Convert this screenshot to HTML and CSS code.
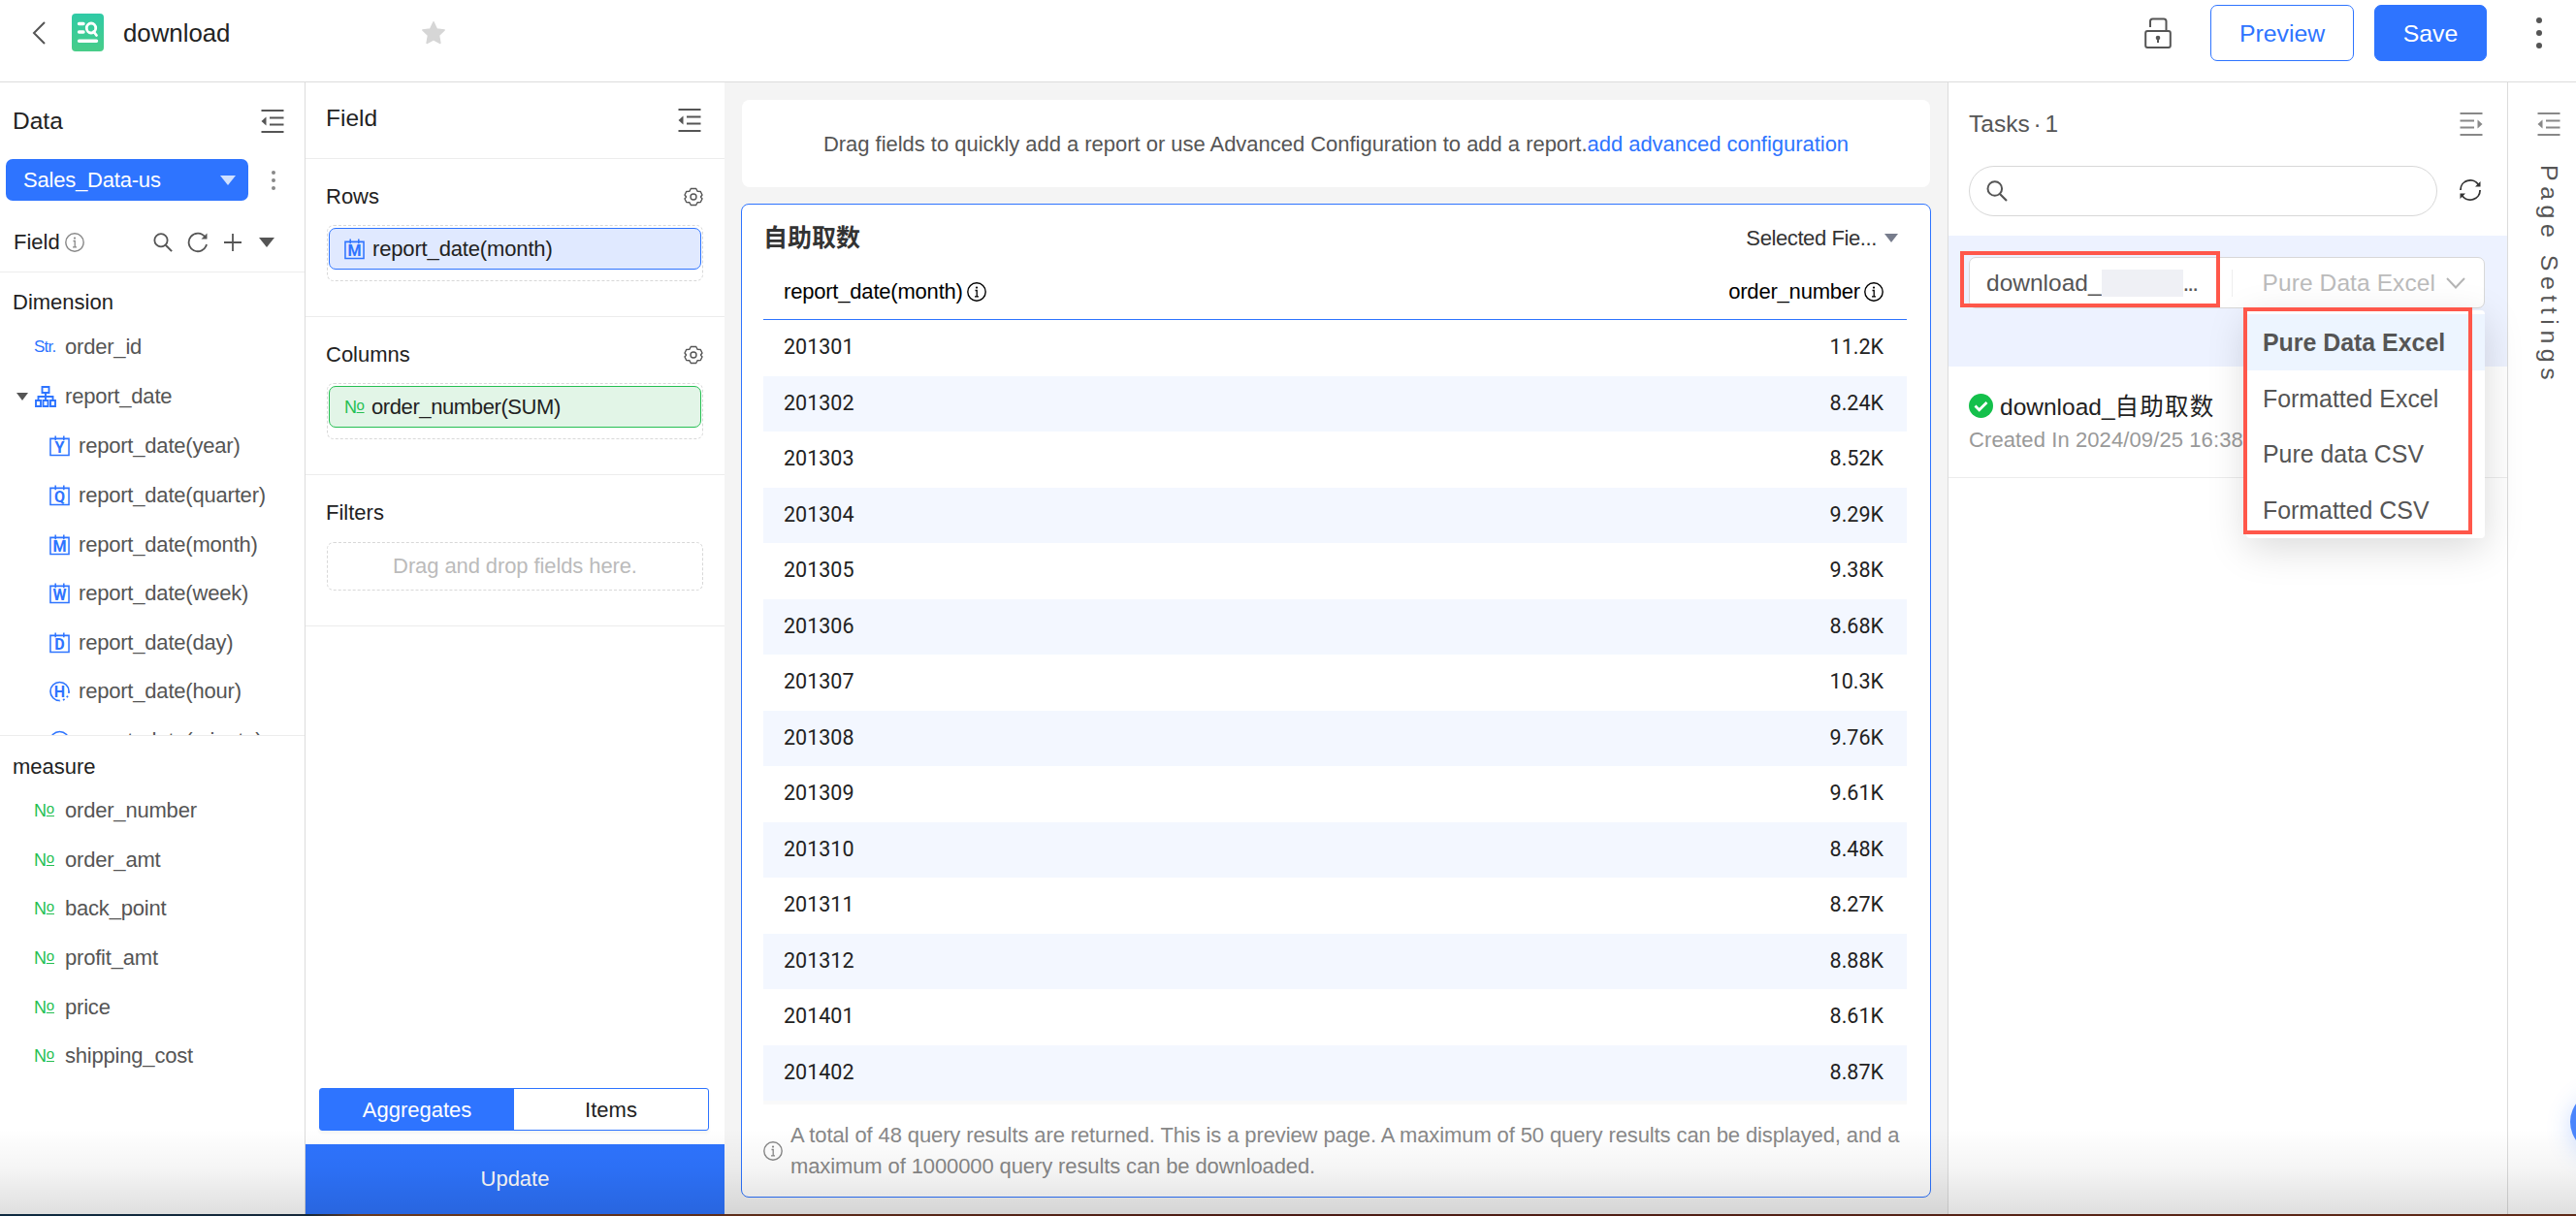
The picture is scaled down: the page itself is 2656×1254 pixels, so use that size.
FILE: index.html
```html
<!DOCTYPE html>
<html lang="en">
<head>
<meta charset="utf-8">
<title>download</title>
<link rel="stylesheet" href="styles.css">
</head>
<body>

<!-- shared icons -->
<svg width="0" height="0" class="defs">
  <symbol id="fold" viewBox="0 0 24 24"><path d="M0.500 1h23M9 8.500h14.500M9 15.500h14.500M0.500 23h23" fill="none" stroke="currentColor" stroke-width="1.800"/><path d="M5.500 7.500v9L0.500 12z" fill="currentColor"/></symbol>
  <symbol id="unfold" viewBox="0 0 24 24"><path d="M0.500 1h23M0.500 8.500H15M0.500 15.500H15M0.500 23h23" fill="none" stroke="currentColor" stroke-width="1.800"/><path d="M18.500 7.500v9l5-4.500z" fill="currentColor"/></symbol>
  <symbol id="info" viewBox="0 0 20 20"><circle cx="10" cy="10" r="9.200" fill="none" stroke="currentColor" stroke-width="1.400"/><path d="M8.500 8.500h1.700v6M8 14.800h4" fill="none" stroke="currentColor" stroke-width="1.300"/><circle cx="10" cy="5.600" r="1.100" fill="currentColor"/></symbol>
  <symbol id="search" viewBox="0 0 22 22"><circle cx="8.800" cy="8.500" r="7.300" fill="none" stroke="currentColor" stroke-width="2"/><path d="M14 14l7 7" stroke="currentColor" stroke-width="2.200"/></symbol>
  <symbol id="gear" viewBox="0 0 20 20"><path d="M7.300 1.500h5.400l1.500 2.800 3.100.2 1.700 3.500-1.500 2 1.500 2-1.700 3.500-3.100.2-1.500 2.800H7.300l-1.500-2.800-3.100-.2L1 12l1.500-2L1 8l1.700-3.500 3.100-.2z" fill="none" stroke="currentColor" stroke-width="1.400" stroke-linejoin="round"/><circle cx="10" cy="10" r="3" fill="none" stroke="currentColor" stroke-width="1.400"/></symbol>
  <symbol id="cal" viewBox="0 0 22 22"><path d="M1 3h20v18H1zM6.500 0v5M15.500 0v5" fill="none" stroke="currentColor" stroke-width="1.600"/></symbol>
  <symbol id="clock" viewBox="0 0 22 22"><path d="M11 21A10 10 0 1 1 21 11" fill="none" stroke="currentColor" stroke-width="1.700"/><path d="M21 11A10 10 0 0 1 11 21" fill="none" stroke="currentColor" stroke-width="1.900" stroke-dasharray="2 3"/></symbol>
</svg>

<div class="header">
  <svg class="back" viewBox="0 0 14 24"><path d="M13 1L2 12l11 11" fill="none" stroke="#555" stroke-width="2"/></svg>
  <svg class="logo" viewBox="0 0 33 39">
    <defs><linearGradient id="lg" x1="0" y1="0" x2="0" y2="1"><stop offset="0" stop-color="#2fcaa6"/><stop offset="1" stop-color="#48cd88"/></linearGradient></defs>
    <rect width="33" height="39" rx="4" fill="url(#lg)"/>
    <path d="M7.500 10.500h4.500M7.500 19h4.500M7.500 28.300h18" stroke="#fff" stroke-width="3.400" stroke-linecap="round" fill="none"/>
    <ellipse cx="20" cy="15" rx="4.700" ry="5" fill="none" stroke="#fff" stroke-width="2.800"/>
    <path d="M22.500 18.500l3 4" stroke="#fff" stroke-width="2.800" stroke-linecap="round"/>
  </svg>
  <span class="doc-name">download</span>
  <svg class="star" viewBox="0 0 24 24"><path d="M12 0.800l3.400 7.200 7.800 1-5.700 5.500 1.400 8L12 18.800 5.100 22.500l1.400-8L.8 9l7.800-1z" fill="#d6d6d6" stroke="#d6d6d6" stroke-width="1.500" stroke-linejoin="round"/></svg>
  <svg class="lock" viewBox="0 0 28 32"><rect x="1.200" y="14" width="25.600" height="17" rx="2" fill="none" stroke="#555" stroke-width="2"/><path d="M6 10V4a2.500 2.500 0 0 1 2.500-2.500H20A2.500 2.500 0 0 1 22.500 4v10" fill="none" stroke="#555" stroke-width="2"/><circle cx="14" cy="21" r="2.300" fill="#555"/><path d="M14 21v5" stroke="#555" stroke-width="2"/></svg>
  <button class="btn preview">Preview</button>
  <button class="btn save">Save</button>
  <svg class="more" viewBox="0 0 6 32"><circle cx="3" cy="3" r="3"/><circle cx="3" cy="16" r="3"/><circle cx="3" cy="29" r="3"/></svg>
</div>

<div class="main">

  <div class="data-panel">
    <div class="data-title"><span>Data</span><svg class="i24"><use href="#fold"/></svg></div>
    <div class="dataset">
      <div class="dataset-select"><span>Sales_Data-us</span><i class="caret"></i></div>
      <svg class="dots" viewBox="0 0 4 20"><circle cx="2" cy="2" r="2"/><circle cx="2" cy="10" r="2"/><circle cx="2" cy="18" r="2"/></svg>
    </div>
    <div class="field-bar">
      <span>Field</span><svg class="i20 info"><use href="#info"/></svg>
      <svg class="i20 find"><use href="#search"/></svg>
      <svg class="redo" viewBox="0 0 22 22"><path d="M18.500 5.500A9.300 9.300 0 1 0 20 13" fill="none" stroke="#555" stroke-width="1.800"/><path d="M20.500 1.500v6h-6z" fill="#555"/></svg>
      <svg class="plus" viewBox="0 0 18 18"><path d="M9 0v18M0 9h18" stroke="#555" stroke-width="1.800"/></svg>
      <i class="caret"></i>
    </div>
    <div class="dimension">
      <h4>Dimension</h4>
      <div class="item"><b class="str">Str.</b>order_id</div>
      <div class="item parent"><i class="caret"></i><svg class="tree" viewBox="0 0 22 22"><path d="M7.500 1h7v6h-7zM1 15h5v6H1zM8.500 15h5v6h-5zM16 15h5v6h-5zM11 7v8M3.500 15v-4h15v4" fill="none" stroke="#2e74ff" stroke-width="1.900"/></svg>report_date</div>
      <div class="sub">
        <div class="item"><span class="type"><svg><use href="#cal"/></svg>Y</span>report_date(year)</div>
        <div class="item"><span class="type"><svg><use href="#cal"/></svg>Q</span>report_date(quarter)</div>
        <div class="item"><span class="type"><svg><use href="#cal"/></svg>M</span>report_date(month)</div>
        <div class="item"><span class="type"><svg><use href="#cal"/></svg>W</span>report_date(week)</div>
        <div class="item"><span class="type"><svg><use href="#cal"/></svg>D</span>report_date(day)</div>
        <div class="item"><span class="type round"><svg><use href="#clock"/></svg>H</span>report_date(hour)</div>
        <div class="item"><span class="type round"><svg><use href="#clock"/></svg>M</span>report_date(minute)</div>
      </div>
    </div>
    <div class="measure">
      <h4>measure</h4>
      <div class="item"><b class="num">N<u>o</u></b>order_number</div>
      <div class="item"><b class="num">N<u>o</u></b>order_amt</div>
      <div class="item"><b class="num">N<u>o</u></b>back_point</div>
      <div class="item"><b class="num">N<u>o</u></b>profit_amt</div>
      <div class="item"><b class="num">N<u>o</u></b>price</div>
      <div class="item"><b class="num">N<u>o</u></b>shipping_cost</div>
    </div>
  </div>

  <div class="field-panel">
    <div class="field-title"><span>Field</span><svg class="i24"><use href="#fold"/></svg></div>
    <div class="section">
      <div class="section-head"><span>Rows</span><svg class="i20"><use href="#gear"/></svg></div>
      <div class="drop"><div class="pill blue"><span class="type"><svg><use href="#cal"/></svg>M</span>report_date(month)</div></div>
    </div>
    <div class="section">
      <div class="section-head"><span>Columns</span><svg class="i20"><use href="#gear"/></svg></div>
      <div class="drop"><div class="pill green"><b class="num">N<u>o</u></b>order_number(SUM)</div></div>
    </div>
    <div class="section filters">
      <div class="section-head"><span>Filters</span></div>
      <div class="drop empty">Drag and drop fields here.</div>
    </div>
    <div class="switch"><span class="on">Aggregates</span><span>Items</span></div>
    <div class="update">Update</div>
  </div>

  <div class="canvas">
    <div class="tip"><span class="tip-text">Drag fields to quickly add a report or use Advanced Configuration to add a report.</span><a>add advanced configuration</a></div>
    <div class="report">
      <div class="report-head"><h3>自助取数</h3><span class="selected">Selected Fie...</span><i class="caret"></i></div>
      <table class="grid">
        <thead><tr><th>report_date(month)<svg class="i20"><use href="#info"/></svg></th><th>order_number<svg class="i20"><use href="#info"/></svg></th></tr></thead>
        <tbody>
          <tr><td>201301</td><td>11.2K</td></tr>
          <tr><td>201302</td><td>8.24K</td></tr>
          <tr><td>201303</td><td>8.52K</td></tr>
          <tr><td>201304</td><td>9.29K</td></tr>
          <tr><td>201305</td><td>9.38K</td></tr>
          <tr><td>201306</td><td>8.68K</td></tr>
          <tr><td>201307</td><td>10.3K</td></tr>
          <tr><td>201308</td><td>9.76K</td></tr>
          <tr><td>201309</td><td>9.61K</td></tr>
          <tr><td>201310</td><td>8.48K</td></tr>
          <tr><td>201311</td><td>8.27K</td></tr>
          <tr><td>201312</td><td>8.88K</td></tr>
          <tr><td>201401</td><td>8.61K</td></tr>
          <tr><td>201402</td><td>8.87K</td></tr>
        </tbody>
      </table>
      <div class="note"><svg class="i20"><use href="#info"/></svg><p>A total of 48 query results are returned. This is a preview page. A maximum of 50 query results can be displayed, and a<br>maximum of 1000000 query results can be downloaded.</p></div>
    </div>
  </div>

  <div class="tasks">
    <div class="tasks-title"><span>Tasks · 1</span><svg class="i24"><use href="#unfold"/></svg></div>
    <div class="tasks-search">
      <div class="search-box"><svg><use href="#search"/></svg></div>
      <svg class="sync" viewBox="0 0 24 24"><path d="M2 12A10 9.800 0 0 1 20.500 6.500M22 12A10 9.800 0 0 1 3.500 17.500" fill="none" stroke="#333" stroke-width="1.800"/><path d="M22.500 3v5.500H17zM1.500 21v-5.500H7z" fill="#333"/></svg>
    </div>
    <div class="new-task">
      <div class="task-input">
        <span class="task-name">download_</span><span class="mask"></span><span class="ell">...</span>
        <span class="format">Pure Data Excel</span>
        <svg class="chev" viewBox="0 0 20 12"><path d="M1 1l9 9.500L19 1" fill="none" stroke="#b5b5b5" stroke-width="2"/></svg>
      </div>
    </div>
    <div class="task-done">
      <div class="done-name"><svg viewBox="0 0 25 25"><circle cx="12.500" cy="12.500" r="12.500" fill="#14c04b"/><path d="M6.500 12.500l4.200 4.200 7.800-7.700" fill="none" stroke="#fff" stroke-width="2.800"/></svg><span>download_<em>自助取数</em></span></div>
      <div class="created">Created In 2024/09/25 16:38</div>
    </div>

    <div class="format-menu">
      <div class="active">Pure Data Excel</div>
      <div>Formatted Excel</div>
      <div>Pure data CSV</div>
      <div>Formatted CSV</div>
    </div>
    <div class="mark mark-name"></div>
    <div class="mark mark-menu"></div>
  </div>

  <div class="settings">
    <svg class="i24"><use href="#fold"/></svg>
    <span>Page Settings</span>
  </div>
</div>

<div class="float-ball"></div>
<div class="shade"></div>
<div class="desk"></div>

</body>
</html>
```
FILE: styles.css
```css
* { box-sizing: border-box; }
body {
  margin: 0;
  width: 2656px;
  height: 1254px;
  overflow: hidden;
  position: relative;
  background: #fff;
  color: #222;
  font-family: "Liberation Sans", Arial, "Noto Sans CJK SC", sans-serif;
  font-size: 22px;
}
h3, h4, p { margin: 0; font-weight: normal; }
svg { display: block; flex: none; overflow: visible; }
.defs { position: absolute; }
.i24 { width: 24px; height: 24px; color: #555; }
.i20 { width: 20px; height: 20px; color: #555; }
.caret {
  width: 0;
  height: 0;
  border: 8px solid transparent;
  border-top: 10px solid #555;
  border-bottom: 0;
}

/* header */
.header {
  height: 85px;
  border-bottom: 1px solid #dcdcdc;
  display: flex;
  align-items: center;
  padding: 0 35px 17px 33px;
}
.back { width: 14px; height: 24px; }
.logo { width: 33px; height: 39px; margin-left: 27px; }
.doc-name { font-size: 25.800px; margin-left: 20px; width: 308px; padding-top: 2px; }
.star { width: 24px; height: 24px; }
.lock { width: 28px; height: 32px; margin-left: auto; margin-right: 40px; }
.btn {
  height: 58px;
  border: 1px solid #2e74ff;
  border-radius: 7px;
  font: 24.800px "Liberation Sans", Arial, sans-serif;
  padding: 2px 0 0;
}
.preview { width: 148px; color: #2e74ff; background: #fff; margin-right: 21px; }
.save { width: 116px; color: #fff; background: #2e74ff; margin-right: 51px; }
.more { width: 6px; height: 32px; fill: #555; }

.main { display: flex; height: 1169px; }

/* data panel */
.data-panel {
  width: 315px;
  border-right: 1px solid #dcdcdc;
  display: flex;
  flex-direction: column;
}
.data-title {
  display: flex;
  justify-content: space-between;
  align-items: center;
  height: 79px;
  padding: 0 21px 0 13px;
  font-size: 24.500px;
}
.dataset { display: flex; align-items: center; padding-left: 6px; height: 43px; }
.dataset-select {
  width: 250px;
  height: 43px;
  border-radius: 7px;
  background: #2e74ff;
  color: #fff;
  display: flex;
  align-items: center;
  justify-content: space-between;
  padding: 0 13px 0 18px;
  letter-spacing: -.2px;
}
.dataset-select .caret { border-top-color: #cfe0ff; }
.dots { width: 4px; height: 20px; margin-left: 24px; fill: #888; }
.field-bar { display: flex; align-items: center; height: 74px; padding: 13px 0 0 14px; border-bottom: 1px solid #ececec; }
.field-bar .info { margin-left: 5px; color: #888; }
.field-bar .find { margin-left: 71px; }
.redo { width: 22px; height: 22px; margin-left: 15px; }
.plus { width: 18px; height: 18px; margin-left: 16px; }
.field-bar .caret { margin-left: 18px; }
.dimension { height: 478px; overflow: hidden; border-bottom: 1px solid #ececec; }
h4 { font-size: 22px; padding-left: 13px; line-height: 62px; }
.dimension h4 { height: 52px; }
.measure h4 { height: 52px; line-height: 64px; }
.item { display: flex; align-items: center; height: 50.600px; padding-left: 35px; color: #555; letter-spacing: -.2px; }
.sub { padding-top: 1px; }
.sub .item { padding-left: 51px; }
.str { width: 32px; font-size: 17px; font-weight: normal; color: #2e74ff; letter-spacing: -.8px; }
.num { width: 32px; font-size: 18px; font-weight: normal; color: #26bf53; }
.num u { font-size: 15px; vertical-align: 3px; text-underline-offset: 2px; }
.parent { padding-left: 17px; }
.parent .caret { border-width: 8px 6px 0; margin-right: 7px; }
.tree { width: 22px; height: 22px; margin-right: 9px; }
.type {
  width: 21px;
  height: 22px;
  display: flex;
  align-items: center;
  justify-content: center;
  padding-top: 3px;
  margin-right: 9px;
  font-size: 16px;
  font-family: Roboto, sans-serif;
  font-weight: bold;
  letter-spacing: 0;
  color: #2e74ff;
  position: relative;
}
.type svg { position: absolute; left: 0; top: 0; width: 21px; height: 22px; }
.type.round { padding-top: 0; }

/* field panel */
.field-panel { width: 432px; display: flex; flex-direction: column; }
.field-title {
  display: flex;
  justify-content: space-between;
  align-items: center;
  height: 79px;
  padding: 0 24px 0 21px;
  font-size: 24.500px;
  border-bottom: 1px solid #ececec;
}
.field-title span { padding-bottom: 4px; }
.section { height: 163px; border-bottom: 1px solid #ececec; padding: 0 22px; }
.section.filters { height: 156px; }
.section-head { display: flex; justify-content: space-between; align-items: center; height: 68px; padding-top: 9px; }
.section-head span { margin-left: -1px; }
.drop { height: 58px; border: 1px dashed #d8d8d8; border-radius: 7px; padding: 2px 1px; }
.empty { height: 50px; margin-top: 1px; display: flex; align-items: center; justify-content: center; color: #bbb; letter-spacing: -.1px; }
.pill { display: flex; align-items: center; height: 43px; border-radius: 7px; border: 1px solid; padding: 1px 0 0 15px; color: #222; letter-spacing: -.15px; }
.blue { background: #e0e9ff; border-color: #2e74ff; }
.green { background: #e2f5e7; border-color: #26bf53; letter-spacing: -.4px; }
.pill .num { width: 28px; }
.pill .type { margin-right: 8px; }
.switch {
  margin: auto 16px 14px 14px;
  height: 44px;
  border: 1px solid #2e74ff;
  border-radius: 3px;
  display: flex;
  box-shadow: 0 3px 3px rgba(0,0,0,.04);
}
.switch span { flex: 1; text-align: center; line-height: 43px; }
.switch .on { background: #2e74ff; color: #fff; }
.update { height: 74px; background: #2e74ff; color: #fff; text-align: center; line-height: 72px; }

/* canvas */
.canvas { width: 1261px; background: #f4f4f4; padding: 18px 17px 0; }
.tip {
  height: 90px;
  margin: 0 1px;
  padding-top: 2px;
  background: #fff;
  border-radius: 8px;
  color: #555;
  display: flex;
  align-items: center;
  justify-content: center;
  letter-spacing: -.03px;
}
.tip a { color: #2e74ff; }
.report { margin-top: 17px; height: 1025px; border: 1px solid #2e74ff; border-radius: 8px; background: #fff; padding: 0 24px 0 22px; }
.report-head { display: flex; align-items: center; height: 68px; padding-top: 1px; }
.report-head h3 { font-size: 25px; font-weight: bold; color: #333; font-family: "Noto Sans CJK SC", sans-serif; margin-top: -5px; }
.selected { margin-left: auto; color: #333; letter-spacing: -.4px; }
.report-head .caret { border-width: 9px 7px 0; border-top-color: #777c8c; margin: 0 9px 0 8px; }
.grid { width: 100%; border-collapse: separate; border-spacing: 0; }
.grid th { height: 51px; font-weight: normal; color: #000; text-align: left; padding: 0 21px 6px; border-bottom: 1px solid #2e74ff; letter-spacing: -.2px; }
.grid th svg { display: inline-block; vertical-align: -3px; margin-left: 4px; color: #000; }
.grid td { height: 57.500px; padding: 0 21px 2px; font-family: Roboto, sans-serif; font-size: 21.500px; }
.grid td:last-child, .grid th:last-child { text-align: right; padding-right: 24px; }
.grid tr:nth-child(even) td { background: #f3f7ff; }
.note { display: flex; align-items: center; padding-top: 16px; border-top: 4px solid #f9f9f9; color: #888; }
.note .i20 { color: #888; margin-right: 8px; }
.note p { line-height: 32px; white-space: nowrap; letter-spacing: -.11px; }

/* tasks */
.tasks { width: 578px; border-left: 1px solid #dcdcdc; border-right: 1px solid #dcdcdc; position: relative; color: #555; font-size: 24.500px; }
.tasks-title { display: flex; justify-content: space-between; align-items: center; height: 86px; padding: 0 25px 0 21px; word-spacing: -3px; }
.tasks-title .i24, .settings .i24 { color: #888; }
.tasks-search { display: flex; align-items: center; padding-left: 21px; }
.search-box { width: 483px; height: 52px; border: 1px solid #d8d8d8; border-radius: 26px; padding: 14px 17px; }
.search-box svg { width: 22px; height: 22px; }
.sync { width: 24px; height: 24px; margin-left: 22px; margin-bottom: 3px; }
.new-task { margin-top: 20px; height: 135px; background: #edf2ff; padding: 22px 23px 0 21px; }
.task-input { height: 53px; border: 1px solid #d8d8d8; border-radius: 7px; background: #fff; display: flex; align-items: center; padding-left: 17px; }
.mask { width: 84px; height: 28px; background: #eff0f5; }
.ell { width: 50px; overflow: hidden; letter-spacing: -2px; }
.format { border-left: 1px solid #eee; padding-left: 31px; color: #bbb; letter-spacing: .1px; }
.chev { width: 20px; height: 12px; margin-left: 11px; }
.task-done { height: 115px; border-bottom: 1px solid #ececec; padding: 20px 0 0 21px; }
.done-name { display: flex; align-items: center; height: 41px; color: #222; }
.done-name span { margin-top: -2px; }
.done-name em { font-style: normal; letter-spacing: 1.200px; }
.done-name svg { width: 25px; height: 25px; margin-right: 7px; }
.created { font-size: 22px; color: #999; line-height: 30px; letter-spacing: .1px; }
.format-menu {
  position: absolute;
  left: 307px;
  top: 235px;
  width: 246px;
  height: 235px;
  padding-top: 4px;
  border-radius: 4px;
  background: #fff;
  box-shadow: 0 10px 40px rgba(0,0,0,.15);
}
.format-menu div { height: 57.700px; line-height: 58px; padding-left: 17px; font-size: 24.900px; }
.format-menu .active { background: #edf5ff; font-weight: bold; }
.mark { position: absolute; border: 4px solid #ff574a; }
.mark-name { left: 12px; top: 174px; width: 268px; height: 58px; }
.mark-menu { left: 304px; top: 232px; width: 236px; height: 234px; }

.settings { flex: 1; padding: 31px 0 0 30px; color: #555; }
.settings span { display: block; writing-mode: vertical-rl; font-size: 24.800px; letter-spacing: 5.600px; margin-top: 30px; line-height: 24px; }

.float-ball {
  position: absolute;
  left: 2650px;
  top: 1125px;
  width: 64px;
  height: 64px;
  border-radius: 50%;
  background: #4a85fc;
  box-shadow: 0 6px 24px rgba(46,116,255,.25);
}
.shade { position: absolute; left: 0; right: 0; bottom: 0; height: 90px; background: linear-gradient(rgba(0,0,0,0), rgba(0,0,0,.04) 45%, rgba(0,0,0,.13)); }
.desk { position: absolute; left: 0; right: 0; bottom: 0; height: 2px; background: linear-gradient(90deg, #0e2a40, #16283a 12%, #6b3a1e 14%, #4a1a14 50%, #5f2a18); }
```
